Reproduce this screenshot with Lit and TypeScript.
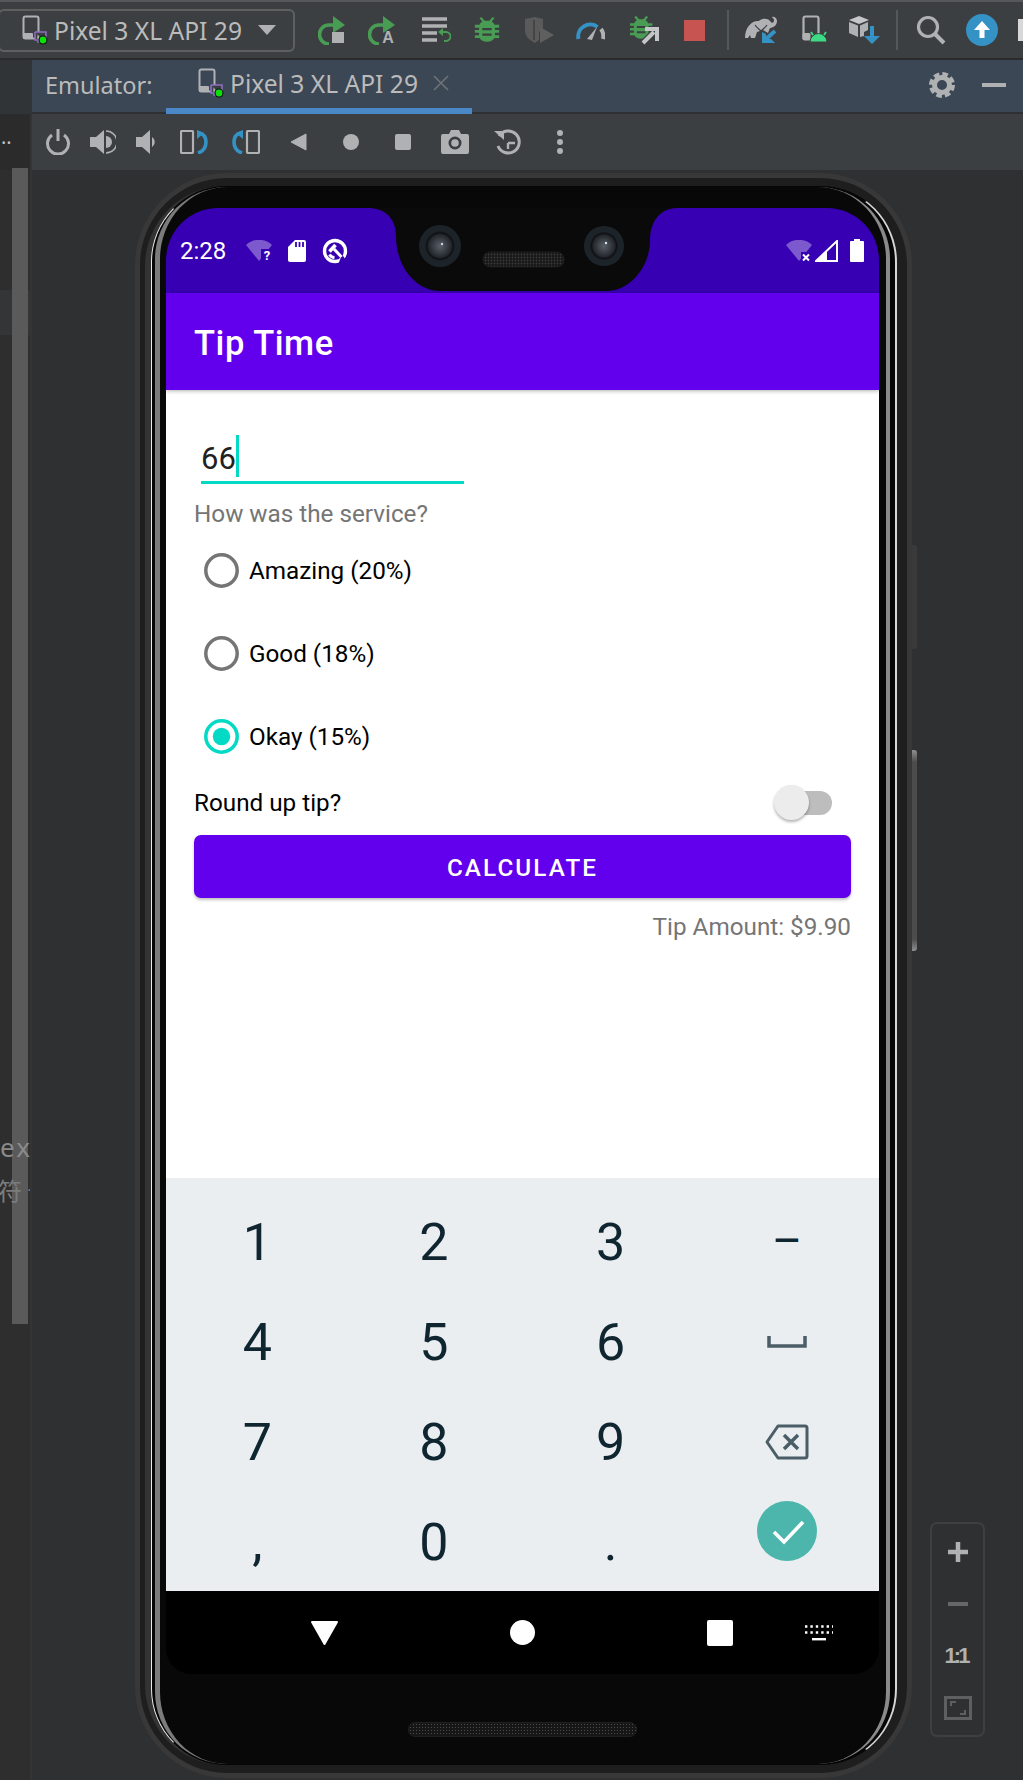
import { LitElement, html, svg, css } from 'lit';
import { customElement } from 'lit/decorators.js';

const GRAY = '#afb1b3';
const GREEN = '#499c54';
const BLUE = '#3592c4';

const deviceIcon = () => html`<svg width="26" height="30" viewBox="0 0 26 30">
  <rect x="1.5" y="1.5" width="15" height="22" rx="2" fill="none" stroke=${GRAY} stroke-width="2"/>
  <rect x="1" y="18" width="10" height="6" rx="1" fill=${GRAY}/>
  <path d="M13 17h11v8h-8v2h7M13 17v8h3" fill="#3c3f41" stroke="#8e6fc0" stroke-width="1.6"/>
  <circle cx="21" cy="25" r="4.5" fill="#111"/>
  <circle cx="21" cy="25" r="3.4" fill="#0be00b"/>
</svg>`;

const bugBody = svg`
  <path d="M7 1l3.5 4h5L19 1l2 1.5-3 3.5c1.500 1 2.500 2 3 3.500h5v3h-4.500v2.500H26v3h-4.500v2.500H26v3h-5c-1.500 2.500-4 4-8 4s-6.500-1.500-8-4H0v-3h4.500V18H0v-3h4.500v-2.500H0v-3h5c.5-1.500 1.500-2.500 3-3.500L5 2.500z" fill=${GREEN}/>
  <path d="M8 14h10M8 20h10" stroke="#3c3f41" stroke-width="2.400"/>`;

const topIcons = [
  { gap: 23, w: 28, t: html`<svg width="28" height="30" viewBox="0 0 28 30">
    <path d="M16 10h-5a9.500 9.500 0 1 0 0 19" fill="none" stroke=${GREEN} stroke-width="3.600"/>
    <path d="M15 1l12 9-12 8z" fill=${GREEN}/><rect x="14" y="17" width="12" height="11" fill=${GRAY}/></svg>` },
  { gap: 22, w: 28, t: html`<svg width="28" height="30" viewBox="0 0 28 30">
    <path d="M16 10h-5a9.500 9.500 0 1 0 0 19" fill="none" stroke=${GREEN} stroke-width="3.600"/>
    <path d="M15 1l12 9-12 8z" fill=${GREEN}/>
    <text x="20" y="28" text-anchor="middle" font-family="Liberation Sans, sans-serif" font-weight="700" font-size="16" fill=${GRAY}>A</text></svg>` },
  { gap: 26, w: 29, t: html`<svg width="29" height="28" viewBox="0 0 29 28">
    <path d="M0 3h25M0 10h25M0 17h15M0 24h15" stroke=${GRAY} stroke-width="3.600"/>
    <path d="M18 16h6a4 4 0 0 1 0 9h-2" fill="none" stroke=${GREEN} stroke-width="1.800"/>
    <path d="M21 12v8l-5-4z" fill=${GREEN}/></svg>` },
  { gap: 23, w: 26, t: html`<svg width="26" height="28" viewBox="0 0 26 30">${bugBody}</svg>` },
  { gap: 24, w: 30, t: html`<svg width="30" height="28" viewBox="0 0 30 28">
    <path d="M1 3l10-2 8 2v9l-4 4v8l-4 3c-6-3-10-7-10-13z" fill="#5a5a5a"/>
    <path d="M10 4v20" stroke="#3c3f41" stroke-width="1.500"/>
    <path d="M16 11l14 8-14 8z" fill="#5f5f5f"/></svg>` },
  { gap: 22, w: 29, t: html`<svg width="29" height="20" viewBox="0 0 29 20">
    <path d="M2.500 19a12 12 0 0 1 19-12" fill="none" stroke=${BLUE} stroke-width="4"/>
    <path d="M25 9a12 12 0 0 1 2 10" fill="none" stroke=${GRAY} stroke-width="4"/>
    <path d="M11 19l10-12-5 13z" fill=${GRAY}/></svg>` },
  { gap: 25, w: 29, t: html`<svg width="29" height="30" viewBox="0 0 29 30">
    <g transform="scale(.86)">${bugBody}</g>
    <path d="M14 28l10-10" stroke="#3c3f41" stroke-width="8"/>
    <path d="M13 28l11-11M15 14h12v12" fill="none" stroke="#c4c6c8" stroke-width="4"/></svg>` },
  { gap: 25, w: 21, t: html`<svg width="21" height="21" viewBox="0 0 21 21"><rect width="21" height="21" fill="#c75450"/></svg>` },
  { gap: 22, w: 2, t: html`<div class="sep"></div>` },
  { gap: 16, w: 32, t: html`<svg width="32" height="28" viewBox="0 0 32 28">
    <path d="M0 22C0 10 8 4 14 5c3-3 9-3 11 0 2 3 4 2 4-1 0-2-2-2-2-3 2-1 5 1 5 4 0 5-5 7-7 7l-2 5-5-3-6 2-2 6H6l-1-3-2 3z" fill=${GRAY}/>
    <path d="M10 9c2 3 4 4 6 6 2-2 4-3 6-6" fill="none" stroke="#3c3f41" stroke-width="1.200"/>
    <path d="M30 15L20 24" stroke=${BLUE} stroke-width="4"/><path d="M17 16v11h13l-4-4h-5v-5z" fill=${BLUE}/></svg>` },
  { gap: 25, w: 25, t: html`<svg width="25" height="30" viewBox="0 0 25 30">
    <rect x="1.500" y="1.500" width="15" height="23" rx="2" fill="none" stroke=${GRAY} stroke-width="2.200"/>
    <rect x="0.500" y="18" width="8" height="7" rx="1.500" fill=${GRAY}/>
    <path d="M8 27a8.500 8.500 0 0 1 17 0z" fill="#3ddc84" stroke="#3c3f41" stroke-width="1"/>
    <path d="M11 20l-2-3M22 20l2-3" stroke="#3ddc84" stroke-width="1.800"/></svg>` },
  { gap: 22, w: 32, t: html`<svg width="32" height="30" viewBox="0 0 32 30">
    <path d="M10 1l10 4-10 4L0 5z" fill="#c4c6c8"/><path d="M0 7l9 3.500V22L0 18z" fill=${GRAY}/>
    <path d="M11 10.500L19 7v8l-4 2v4l-4 1z" fill=${GRAY}/>
    <path d="M23 11v12" stroke=${BLUE} stroke-width="4"/><path d="M15 21h16l-8 8z" fill=${BLUE}/></svg>` },
  { gap: 15, w: 2, t: html`<div class="sep"></div>` },
  { gap: 18, w: 30, t: html`<svg width="30" height="30" viewBox="0 0 30 30">
    <circle cx="12" cy="12" r="9.500" fill="none" stroke=${GRAY} stroke-width="3.200"/>
    <path d="M18.500 18.500L28 28" stroke=${GRAY} stroke-width="4"/></svg>` },
  { gap: 20, w: 32, t: html`<svg width="32" height="32" viewBox="0 0 32 32">
    <circle cx="16" cy="16" r="16" fill=${BLUE}/>
    <path d="M16 7l8 9h-5.500v8h-5v-8H8z" fill="#fff"/></svg>` },
];

const toolIcons = [
  { gap: 13, w: 26, t: html`<svg width="26" height="26" viewBox="0 0 26 26">
    <path d="M7 6a10.500 10.500 0 1 0 12 0" fill="none" stroke=${GRAY} stroke-width="3"/>
    <path d="M13 0v12" stroke=${GRAY} stroke-width="3"/></svg>` },
  { gap: 19, w: 26, t: html`<svg width="26" height="26" viewBox="0 0 26 26">
    <path d="M0 8h6l8-7v24l-8-7H0z" fill=${GRAY}/>
    <path d="M16 7a6 6 0 0 1 0 12z" fill=${GRAY}/>
    <path d="M16 2a11 11 0 0 1 0 22" fill="none" stroke=${GRAY} stroke-width="1.600"/></svg>` },
  { gap: 20, w: 20, t: html`<svg width="20" height="26" viewBox="0 0 20 26">
    <path d="M0 8h6l8-7v24l-8-7H0z" fill=${GRAY}/>
    <path d="M16 8a6 6 0 0 1 0 10z" fill=${GRAY}/></svg>` },
  { gap: 24, w: 28, t: html`<svg width="28" height="24" viewBox="0 0 28 24">
    <rect x="1" y="1" width="12" height="22" rx="1" fill="none" stroke=${GRAY} stroke-width="2.200"/>
    <path d="M19 3c5 1 7 4 7 9s-2 9-8 11" fill="none" stroke=${BLUE} stroke-width="3.600"/>
    <path d="M17 0v9l7-6z" fill=${BLUE}/></svg>` },
  { gap: 24, w: 28, t: html`<svg width="28" height="24" viewBox="0 0 28 24">
    <rect x="15" y="1" width="12" height="22" rx="1" fill="none" stroke=${GRAY} stroke-width="2.200"/>
    <path d="M9 3C4 4 2 7 2 12s2 9 8 11" fill="none" stroke=${BLUE} stroke-width="3.600"/>
    <path d="M11 0v9L4 3z" fill=${BLUE}/></svg>` },
  { gap: 30, w: 17, t: html`<svg width="17" height="18" viewBox="0 0 17 18"><path d="M1 9l15-8v16z" fill=${GRAY} stroke=${GRAY} stroke-linejoin="round"/></svg>` },
  { gap: 35, w: 18, t: html`<svg width="18" height="18" viewBox="0 0 18 18"><circle cx="9" cy="9" r="8" fill=${GRAY}/></svg>` },
  { gap: 35, w: 16, t: html`<svg width="16" height="16" viewBox="0 0 16 16"><rect width="16" height="16" rx="2" fill=${GRAY}/></svg>` },
  { gap: 30, w: 28, t: html`<svg width="28" height="24" viewBox="0 0 28 24">
    <path d="M2 4h6l2-4h8l2 4h6a2 2 0 0 1 2 2v16a2 2 0 0 1-2 2H2a2 2 0 0 1-2-2V6a2 2 0 0 1 2-2z" fill=${GRAY}/>
    <circle cx="14" cy="13" r="6.500" fill="#3c3f41"/><circle cx="14" cy="13" r="3.800" fill=${GRAY}/></svg>` },
  { gap: 25, w: 28, t: html`<svg width="28" height="28" viewBox="0 0 28 28">
    <path d="M5 8a11 11 0 1 1-1 10" fill="none" stroke=${GRAY} stroke-width="3"/>
    <path d="M0 3h10v9z" fill=${GRAY}/>
    <path d="M14 15h7M14 15v6" stroke=${GRAY} stroke-width="2.400" fill="none"/></svg>` },
  { gap: 35, w: 6, t: html`<svg width="6" height="24" viewBox="0 0 6 24">
    <circle cx="3" cy="3" r="3" fill=${GRAY}/><circle cx="3" cy="12" r="3" fill=${GRAY}/><circle cx="3" cy="21" r="3" fill=${GRAY}/></svg>` },
];

const keys = ['1', '2', '3', '–', '4', '5', '6', 'space', '7', '8', '9', 'del', ',', '0', '.', 'go'];

@customElement('app-root')
export class AppRoot extends LitElement {
  static styles = css`
    :host {
      display: block;
      width: 1023px;
      height: 1780px;
      overflow: hidden;
      background: #2f3032;
      font-family: 'Noto Sans', 'Open Sans', sans-serif;
    }
    * { box-sizing: border-box; }
    .topbar {
      display: flex;
      align-items: center;
      height: 60px;
      background: #3c3f41;
      border-top: 2px solid #555759;
      border-bottom: 2px solid #2b2b2b;
    }
    .combo {
      display: flex;
      flex: none;
      align-items: center;
      gap: 6px;
      width: 297px;
      height: 43px;
      margin-left: -2px;
      padding-left: 22px;
      border: 2px solid #5e6060;
      border-radius: 6px;
      color: #bbbbbb;
      font-size: 24.600px;
      white-space: nowrap;
    }
    .combo-arrow {
      margin-left: 10px;
      width: 0;
      height: 0;
      border-left: 9px solid transparent;
      border-right: 9px solid transparent;
      border-top: 10px solid #afb1b3;
    }
    .slot { display: flex; flex: none; align-items: center; justify-content: center; }
    .sep { width: 2px; height: 40px; background: #555759; }
    .sliver { margin-left: 20px; width: 6px; height: 22px; background: #d8d8d8; flex: none; }
    .body { display: flex; height: 1720px; }
    .strip {
      position: relative;
      flex: none;
      width: 32px;
      overflow: hidden;
      background: #2e2e2e;
      border-right: 2px solid #333436;
      color: #8a8a8a;
      white-space: nowrap;
    }
    .strip-head { height: 54px; background: #313437; }
    .strip-dots {
      height: 56px;
      background: #2b2b2b;
      color: #c0c0c0;
      font-size: 20px;
      line-height: 46px;
      padding-left: 1px;
    }
    .strip-band { margin-top: 120px; height: 45px; background: #343536; }
    .scroll {
      position: absolute;
      left: 12px;
      top: 108px;
      width: 16px;
      height: 1156px;
      background: #5a5a5a;
    }
    .strip-text { position: relative; font-size: 26px; line-height: 30px; letter-spacing: 2px; }
    .strip-ex { margin-top: 797px; }
    .strip-cjk {
      margin-top: 13px;
      margin-left: -2px;
      font-family: 'Noto Sans CJK SC', sans-serif;
      font-size: 24px;
      letter-spacing: 5px;
      color: #7c7c7c;
    }
    .main { flex: 1; min-width: 0; display: flex; flex-direction: column; }
    .header {
      display: flex;
      align-items: stretch;
      height: 54px;
      flex: none;
      background: #3b4754;
      border-bottom: 2px solid #2f3032;
      color: #bbbbbb;
      font-size: 24.600px;
      white-space: nowrap;
    }
    .header-label { width: 121px; margin-left: 13px; font-size: 23.500px; line-height: 50px; }
    .tab {
      display: flex;
      align-items: center;
      gap: 6px;
      width: 306px;
      height: 54px;
      padding-left: 32px;
      padding-bottom: 2px;
      border-bottom: 6px solid #4a88c7;
    }
    .tab-close { margin-left: 9px; }
    .gear { margin-left: auto; align-self: center; margin-bottom: 2px; }
    .dash { margin: 0 17px 2px 27px; align-self: center; width: 24px; height: 4px; background: #afb1b3; }
    .tools { display: flex; align-items: center; flex: none; height: 56px; background: #3c3f41; }
    .canvas { position: relative; flex: 1; padding: 3px 0 0 103px; background: #2f3032; overflow: hidden; }
    .zoom-panel {
      position: absolute;
      left: 898px;
      top: 1352px;
      width: 55px;
      height: 215px;
      display: flex;
      flex-direction: column;
      align-items: center;
      border: 2px solid #3e3f41;
      border-radius: 7px;
    }
    .zoom-plus { margin-top: 18px; flex: none; }
    .zoom-minus { margin-top: 40px; width: 20px; height: 4px; background: #666769; flex: none; }
    .zoom-one {
      margin-top: 37px;
      font-family: 'Liberation Sans', sans-serif;
      font-size: 22px;
      font-weight: 700;
      line-height: 26px;
      letter-spacing: -3px;
      padding-right: 3px;
      color: #afb1b3;
    }
    .zoom-fit { margin-top: 27px; flex: none; }

    /* phone shell */
    .shell-a {
      position: relative;
      width: 777px;
      height: 1605px;
      padding: 5px;
      background: #383838;
      border-radius: 92px;
    }
    .side-btn {
      position: absolute;
      left: 777px;
      width: 5px;
      border-radius: 0 3px 3px 0;
    }
    .side-volume { top: 372px; height: 104px; background: #3a3a3a; }
    .side-power { top: 577px; height: 201px; background: linear-gradient(#8f8f8f, #4c4c4c 6%, #4c4c4c 94%, #8f8f8f); }
    .shell-b {
      height: 100%;
      padding: 8px 10px 8px 5px;
      background: #1e1e1e;
      border-radius: 87px;
    }
    .shell-c {
      height: 100%;
      background: #0a0a0a;
      border-left: 6px solid #333;
      border-radius: 80px;
    }
    .shell-d {
      height: 100%;
      padding: 0 5px 0 3px;
      background: #060606;
      border: 1px solid transparent;
      border-left-color: #ececec;
      border-right: 2px solid #d6d6d6;
      border-radius: 76px;
    }
    .shell-e {
      height: 100%;
      padding: 21px 7px 0 6px;
      background: #080808;
      border: 0 solid transparent;
      border-left: 5px solid #7b7b7b;
      border-right: 4px solid #8a8a8a;
      border-radius: 72px;
    }
    .speaker {
      width: 229px;
      height: 15px;
      margin: 48px auto 0;
      border-radius: 7px;
      background-color: #161616;
      background-image: radial-gradient(#4c4c4c 0.8px, transparent 1px);
      background-size: 3px 3px;
      border: 1px solid #1f1f1f;
    }

    /* android screen */
    .screen {
      position: relative;
      display: flex;
      flex-direction: column;
      height: 1466px;
      background: #000;
      border-radius: 52px 52px 26px 26px;
      overflow: hidden;
      font-family: Roboto, sans-serif;
    }
    .status {
      display: flex;
      align-items: center;
      flex: none;
      height: 85px;
      padding: 0 15px 0 14px;
      background: #3700b3;
      color: #fff;
      font-size: 24px;
    }
    .status-time { width: 66px; }
    .status-sd { margin-left: 14px; }
    .status-q { margin-left: 16px; }
    .status-right { margin-left: auto; display: flex; align-items: center; gap: 2px; }
    .status-battery { margin-left: 10px; }
    .notch { position: absolute; left: 201px; top: 0; }
    .appbar {
      position: relative;
      flex: none;
      height: 97px;
      padding-left: 28px;
      background: #6200ee;
      color: #fff;
      font-size: 34.500px;
      font-weight: 500;
      letter-spacing: 0.550px;
      line-height: 100px;
      box-shadow: 0 1px 4px rgba(0, 0, 0, 0.3);
    }
    .content { flex: none; height: 788px; padding: 40px 28px 0; background: #fff; }
    .field {
      display: flex;
      align-items: flex-start;
      width: 263px;
      height: 54px;
      margin-left: 7px;
      padding-top: 10px;
      border-bottom: 3.500px solid #03dac5;
      color: #212121;
      font-size: 31px;
      line-height: 37px;
    }
    .caret { width: 3px; height: 42px; margin-top: -5px; background: #03dac5; }
    .question {
      height: 45px;
      padding-top: 8px;
      color: #757575;
      font-size: 24.250px;
      line-height: 44px;
    }
    .radio { display: flex; align-items: center; height: 83.200px; color: #000; font-size: 24.250px; }
    .radio svg { margin: 0 10px 0 10px; flex: none; }
    .round {
      display: flex;
      align-items: center;
      justify-content: space-between;
      height: 48px;
      padding-right: 19px;
      color: #000;
      font-size: 24.250px;
    }
    .toggle { display: flex; align-items: center; }
    .thumb {
      position: relative;
      width: 35px;
      height: 35px;
      border-radius: 50%;
      background: #ececec;
      box-shadow: 0 2px 3px rgba(0, 0, 0, 0.3);
    }
    .track { width: 33px; height: 24px; margin-left: -10px; border-radius: 0 12px 12px 0; background: #bdbdbd; }
    .calc {
      display: flex;
      align-items: center;
      justify-content: center;
      height: 63px;
      margin-top: 8px;
      padding-top: 3px;
      border-radius: 7px;
      background: #6200ee;
      color: #fff;
      font-size: 24.250px;
      font-weight: 500;
      letter-spacing: 2.100px;
      box-shadow: 0 2px 3px rgba(0, 0, 0, 0.25);
    }
    .tip {
      margin-top: 11px;
      color: #757575;
      font-size: 24.250px;
      line-height: 36px;
      text-align: right;
    }
    .keyboard {
      display: grid;
      grid-template-columns: repeat(4, 1fr);
      grid-auto-rows: 100px;
      flex: none;
      height: 413px;
      padding: 14px 3.500px 0 3px;
      background: #eaeef1;
      color: #0f2530;
      font-size: 52px;
    }
    .key { display: flex; align-items: center; justify-content: center; }
    .key-dash { font-size: 46px; padding-bottom: 2px; }
    .go { width: 60px; height: 60px; margin-bottom: 22px; }
    .nav {
      display: flex;
      align-items: center;
      flex: none;
      height: 83px;
      background: #000;
    }
    .nav-back { margin-left: 144px; }
    .nav-home { margin-left: 171px; }
    .nav-recent { margin-left: 172px; }
    .nav-kb { margin-left: 72px; }
  `;

  keyView(k: string) {
    if (k === 'space') {
      return html`<div class="key"><svg width="40" height="12" viewBox="0 0 40 12"><path d="M2 0v10h36V0" fill="none" stroke="#4b5d67" stroke-width="3.500"/></svg></div>`;
    }
    if (k === 'del') {
      return html`<div class="key"><svg width="44" height="36" viewBox="0 0 44 36">
        <path d="M13 2h27a2 2 0 0 1 2 2v28a2 2 0 0 1-2 2H13L2 18z" fill="none" stroke="#4b5d67" stroke-width="3" stroke-linejoin="round"/>
        <path d="M19 11l14 14M33 11L19 25" stroke="#4b5d67" stroke-width="3.500"/></svg></div>`;
    }
    if (k === 'go') {
      return html`<div class="key"><svg class="go" viewBox="0 0 60 60">
        <circle cx="30" cy="30" r="30" fill="#4db6ac"/>
        <path d="M17 31l10 10 19-20" fill="none" stroke="#fff" stroke-width="3.600"/></svg></div>`;
    }
    return html`<div class="key ${k === '–' ? 'key-dash' : ''}">${k}</div>`;
  }

  radio(label: string, checked = false) {
    const color = checked ? '#03dac5' : '#757575';
    return html`<div class="radio">
      <svg width="35" height="35" viewBox="0 0 35 35">
        <circle cx="17.500" cy="17.500" r="15.700" fill="none" stroke=${color} stroke-width="3.500"/>
        ${checked ? svg`<circle cx="17.500" cy="17.500" r="8.700" fill=${color}/>` : ''}
      </svg>
      ${label}
    </div>`;
  }

  render() {
    return html`
      <div class="topbar">
        <div class="combo">
          ${deviceIcon()}
          <span>Pixel 3 XL API 29</span>
          <div class="combo-arrow"></div>
        </div>
        ${topIcons.map((i) => html`<div class="slot" style="margin-left:${i.gap}px;width:${i.w}px">${i.t}</div>`)}
        <div class="sliver"></div>
      </div>
      <div class="body">
        <div class="strip">
          <div class="strip-head"></div>
          <div class="strip-dots">..</div>
          <div class="scroll"></div>
          <div class="strip-band"></div>
          <div class="strip-text strip-ex">ex</div>
          <div class="strip-text strip-cjk">符号</div>
        </div>
        <div class="main">
          <div class="header">
            <div class="header-label">Emulator:</div>
            <div class="tab">
              ${deviceIcon()}
              <span>Pixel 3 XL API 29</span>
              <svg class="tab-close" width="16" height="16" viewBox="0 0 16 16"><path d="M1 1l14 14M15 1L1 15" stroke="#6e7276" stroke-width="1.600"/></svg>
            </div>
            <svg class="gear" width="26" height="26" viewBox="0 0 26 26">
              <circle cx="13" cy="13" r="7.500" fill="none" stroke=${GRAY} stroke-width="5"/>
              <circle cx="13" cy="13" r="11" fill="none" stroke=${GRAY} stroke-width="4" stroke-dasharray="5.600 3.040"/>
            </svg>
            <div class="dash"></div>
          </div>
          <div class="tools">
            ${toolIcons.map((i) => html`<div class="slot" style="margin-left:${i.gap}px;width:${i.w}px">${i.t}</div>`)}
          </div>
          <div class="canvas">
            <div class="shell-a">
              <div class="side-btn side-volume"></div>
              <div class="side-btn side-power"></div>
              <div class="shell-b"><div class="shell-c"><div class="shell-d"><div class="shell-e">
                ${this.screen()}
                <div class="speaker"></div>
              </div></div></div></div>
            </div>
            <div class="zoom-panel">
              <svg class="zoom-plus" width="20" height="20" viewBox="0 0 20 20"><path d="M10 0v20M0 10h20" stroke=${GRAY} stroke-width="4.500"/></svg>
              <div class="zoom-minus"></div>
              <div class="zoom-one">1:1</div>
              <svg class="zoom-fit" width="28" height="24" viewBox="0 0 28 24">
                <rect x="1.500" y="1.500" width="25" height="21" fill="none" stroke="#5e5f61" stroke-width="3"/>
                <path d="M7 10V6h5M21 14v4h-5" fill="none" stroke="#5e5f61" stroke-width="2"/>
              </svg>
            </div>
          </div>
        </div>
      </div>
    `;
  }

  screen() {
    return html`<div class="screen">
      <div class="status">
        <span class="status-time">2:28</span>
        <svg width="28" height="22" viewBox="0 0 28 22">
          <path d="M0 5a19 19 0 0 1 26 0L13 21z" fill="#fff" fill-opacity=".35"/>
          <rect x="15" y="9" width="13" height="13" fill="#3700b3"/>
          <text x="21" y="20" text-anchor="middle" font-family="Roboto, sans-serif" font-weight="700" font-size="13" fill="#fff">?</text>
        </svg>
        <svg class="status-sd" width="18" height="22" viewBox="0 0 18 22">
          <path d="M7 0h9a2 2 0 0 1 2 2v18a2 2 0 0 1-2 2H2a2 2 0 0 1-2-2V7z" fill="#fff"/>
          <path d="M8 2v5M11.500 2v5M15 2v5" stroke="#3700b3" stroke-width="1.800"/>
        </svg>
        <svg class="status-q" width="26" height="26" viewBox="0 0 26 26">
          <circle cx="13" cy="13" r="10.500" fill="none" stroke="#fff" stroke-width="3.400"/>
          <path d="M7.500 13.500l6-6.500" stroke="#fff" stroke-width="3.600"/>
          <path d="M12.500 19.500a6 6 0 0 1-5-3" fill="none" stroke="#fff" stroke-width="3"/>
          <path d="M20 16.500l5 7-8.500 2z" fill="#3700b3"/>
          <path d="M12 11l7.500 8" stroke="#fff" stroke-width="3"/>
        </svg>
        <div class="status-right">
          <svg width="27" height="22" viewBox="0 0 27 22">
            <path d="M0 5a19 19 0 0 1 26 0L13 21z" fill="#fff" fill-opacity=".35"/>
            <rect x="15" y="12" width="12" height="10" fill="#3700b3"/>
            <path d="M17 14.500l6 6M23 14.500l-6 6" stroke="#fff" stroke-width="2"/>
          </svg>
          <svg width="23" height="22" viewBox="0 0 23 22">
            <path d="M1 21L22 1v20z" fill="none" stroke="#fff" stroke-width="2"/>
            <path d="M1 21l11-10.500V21z" fill="#fff"/>
          </svg>
          <svg class="status-battery" width="14" height="23" viewBox="0 0 14 23">
            <path d="M4 0h6v2h3a1 1 0 0 1 1 1v19a1 1 0 0 1-1 1H1a1 1 0 0 1-1-1V3a1 1 0 0 1 1-1h3z" fill="#fff"/>
          </svg>
        </div>
      </div>
      <svg class="notch" width="310" height="84" viewBox="0 0 310 84">
        <defs>
          <radialGradient id="lens">
            <stop offset="0" stop-color="#5a6068"/><stop offset=".55" stop-color="#23272c"/><stop offset=".62" stop-color="#0e1013"/>
            <stop offset=".72" stop-color="#1c2329"/><stop offset="1" stop-color="#1c2329"/>
          </radialGradient>
          <pattern id="mesh" width="3" height="3" patternUnits="userSpaceOnUse">
            <rect width="3" height="3" fill="#161616"/><circle cx="1.500" cy="1.500" r=".9" fill="#3c3c3c"/>
          </pattern>
        </defs>
        <path d="M0 0C18 0 29 10 29 28C29 60 50 83 73 83L240 83C262 83 283 60 283 32C283 14 293 0 310 0Z" fill="#0a0a0a"/>
        <circle cx="73" cy="38" r="21" fill="url(#lens)"/>
        <circle cx="75" cy="36" r="1.200" fill="#cdd3dc"/>
        <circle cx="237" cy="38" r="20" fill="url(#lens)"/>
        <circle cx="239" cy="35" r="1.200" fill="#dfe3e8"/>
        <rect x="116" y="44" width="81" height="15" rx="7" fill="url(#mesh)" stroke="#1b1b1b"/>
      </svg>
      <div class="appbar">Tip Time</div>
      <div class="content">
        <div class="field"><span>66</span><div class="caret"></div></div>
        <div class="question">How was the service?</div>
        ${this.radio('Amazing (20%)')}
        ${this.radio('Good (18%)')}
        ${this.radio('Okay (15%)', true)}
        <div class="round">
          <span>Round up tip?</span>
          <div class="toggle"><div class="thumb"></div><div class="track"></div></div>
        </div>
        <div class="calc">CALCULATE</div>
        <div class="tip">Tip Amount: $9.90</div>
      </div>
      <div class="keyboard">${keys.map((k) => this.keyView(k))}</div>
      <div class="nav">
        <svg class="nav-back" width="29" height="26" viewBox="0 0 29 26"><path d="M2 2h25L14.500 24z" fill="#fff" stroke="#fff" stroke-width="2" stroke-linejoin="round"/></svg>
        <svg class="nav-home" width="25" height="25" viewBox="0 0 25 25"><circle cx="12.500" cy="12.500" r="12.500" fill="#fff"/></svg>
        <svg class="nav-recent" width="26" height="26" viewBox="0 0 26 26"><rect width="26" height="26" rx="2" fill="#fff"/></svg>
        <svg class="nav-kb" width="28" height="16" viewBox="0 0 28 16">
          <path d="M0 1.500h28M0 7.500h28" stroke="#fff" stroke-width="2.400" stroke-dasharray="2.400 3"/>
          <rect x="7" y="13" width="14" height="2.400" fill="#fff"/>
        </svg>
      </div>
    </div>`;
  }
}
